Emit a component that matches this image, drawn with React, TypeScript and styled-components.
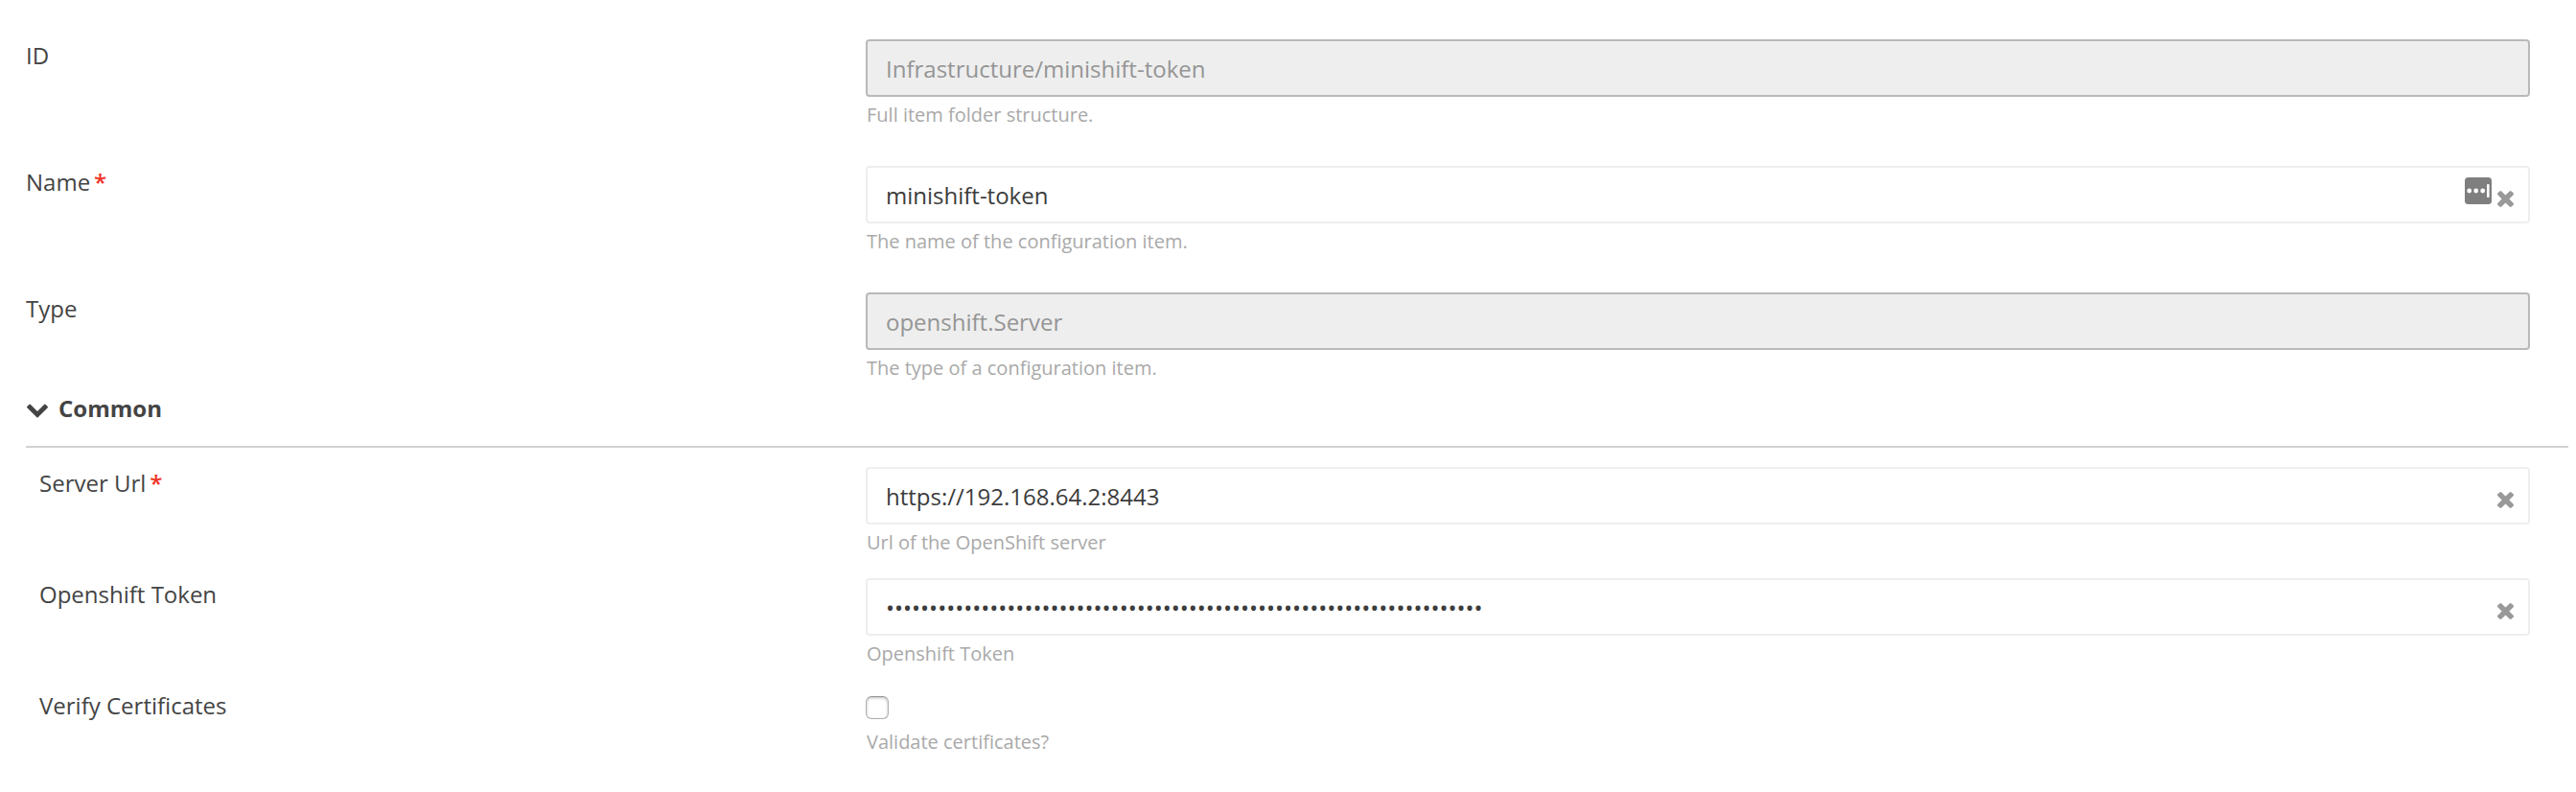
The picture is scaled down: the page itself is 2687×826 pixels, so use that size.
import React from "react";
import styled, { createGlobalStyle } from "styled-components";

const GlobalStyle = createGlobalStyle`
  *, *::before, *::after { box-sizing: border-box; }
  body {
    margin: 0;
    background: #fff;
    color: #444;
    font-family: "Open Sans", sans-serif;
  }
`;

const Form = styled.form`
  display: flex;
  flex-direction: column;
  padding: 41px 8px 0 27px;
`;

const Row = styled.div<{ $height: number }>`
  display: grid;
  grid-template-columns: 876px 1736px;
  align-items: start;
  height: ${(p) => p.$height}px;
`;

const Label = styled.label<{ $nested?: boolean }>`
  padding-left: ${(p) => (p.$nested ? 14 : 0)}px;
  font-size: 24px;
  line-height: 34px;
`;

const Required = styled.span`
  margin-left: 4px;
  color: #f03224;
  font-weight: 600;
`;

const Field = styled.div`
  display: flex;
  flex-direction: column;
`;

const Box = styled.div<{ $disabled?: boolean }>`
  display: flex;
  align-items: center;
  height: 60px;
  padding: 2px 15px 0 19px;
  border: 2px solid ${(p) => (p.$disabled ? "#b9b9b9" : "#eee")};
  border-radius: 4px;
  background: ${(p) => (p.$disabled ? "#eee" : "#fff")};
  color: ${(p) => (p.$disabled ? "#959595" : "#3c3c3c")};
`;

const Value = styled.span`
  flex: 1;
  font-size: 24px;
  line-height: 34px;
  white-space: pre;
`;

const Hint = styled.div<{ $gap?: number }>`
  margin-top: ${(p) => p.$gap ?? 5}px;
  padding-left: 1px;
  font-size: 20px;
  line-height: 28px;
  color: #a9a9a9;
`;

const ManagerIcon = styled.svg`
  width: 28px;
  height: 28px;
  margin: 0 6px 10px 0;
`;

const ClearIcon = styled.svg`
  width: 17px;
  height: 17px;
  margin-top: 6px;
  fill: #999;
`;

const SectionHeader = styled.div`
  display: flex;
  align-items: flex-start;
  height: 58px;
  margin-bottom: 20px;
  border-bottom: 2px solid #d2d2d2;
  font-size: 24px;
  line-height: 34px;
  font-weight: 700;
`;

const Chevron = styled.svg`
  width: 22px;
  height: 15px;
  margin: 12px 11px 0 1px;
  fill: #444;
`;

const Checkbox = styled.div`
  width: 24px;
  height: 24px;
  margin-top: 7px;
  border: 1px solid #b0b0b0;
  border-top-color: #969696;
  border-radius: 6px;
  box-shadow: inset 0 1px 3px #bbb;
`;

const Clear = () => (
  <ClearIcon viewBox="302 366 1188 1188">
    <path d="M1490 1322q0 40-28 68l-136 136q-28 28-68 28t-68-28l-294-294-294 294q-28 28-68 28t-68-28l-136-136q-28-28-28-68t28-68l294-294-294-294q-28-28-28-68t28-68l136-136q28-28 68-28t68 28l294 294 294-294q28-28 68-28t68 28l136 136q28 28 28 68t-28 68l-294 294 294 294q28 28 28 68z" />
  </ClearIcon>
);

const PasswordManager = () => (
  <ManagerIcon viewBox="0 0 28 28">
    <rect width="28" height="28" rx="3.5" fill="#7f7f7f" />
    <g fill="#fff">
      <circle cx="4.7" cy="14" r="2.4" />
      <circle cx="11.7" cy="14" r="2.4" />
      <circle cx="18.7" cy="14" r="2.4" />
      <rect x="23" y="7" width="2.6" height="14" rx="1" />
    </g>
  </ManagerIcon>
);

export default function App() {
  return (
    <>
      <GlobalStyle />
      <Form>
        <Row $height={132}>
          <Label>ID</Label>
          <Field>
            <Box $disabled>
              <Value>Infrastructure/minishift-token</Value>
            </Box>
            <Hint>Full item folder structure.</Hint>
          </Field>
        </Row>
        <Row $height={132}>
          <Label>
            Name<Required>*</Required>
          </Label>
          <Field>
            <Box>
              <Value>minishift-token</Value>
              <PasswordManager />
              <Clear />
            </Box>
            <Hint>The name of the configuration item.</Hint>
          </Field>
        </Row>
        <Row $height={104}>
          <Label>Type</Label>
          <Field>
            <Box $disabled>
              <Value>openshift.Server</Value>
            </Box>
            <Hint>The type of a configuration item.</Hint>
          </Field>
        </Row>
        <SectionHeader>
          <Chevron viewBox="90 533 1612 1035">
            <path d="M1683 808l-742 741q-19 19-45 19t-45-19l-742-741q-19-19-19-45.5t19-45.5l166-165q19-19 45-19t45 19l531 531 531-531q19-19 45-19t45 19l166 165q19 19 19 45.5t-19 45.5z" />
          </Chevron>
          Common
        </SectionHeader>
        <Row $height={116}>
          <Label $nested>
            Server Url<Required>*</Required>
          </Label>
          <Field>
            <Box>
              <Value>https://192.168.64.2:8443</Value>
              <Clear />
            </Box>
            <Hint>Url of the OpenShift server</Hint>
          </Field>
        </Row>
        <Row $height={116}>
          <Label $nested>Openshift Token</Label>
          <Field>
            <Box>
              <Value>{"•".repeat(69)}</Value>
              <Clear />
            </Box>
            <Hint>Openshift Token</Hint>
          </Field>
        </Row>
        <Row $height={107}>
          <Label $nested>Verify Certificates</Label>
          <Field>
            <Checkbox role="checkbox" aria-checked={false} />
            <Hint $gap={10}>Validate certificates?</Hint>
          </Field>
        </Row>
      </Form>
    </>
  );
}
